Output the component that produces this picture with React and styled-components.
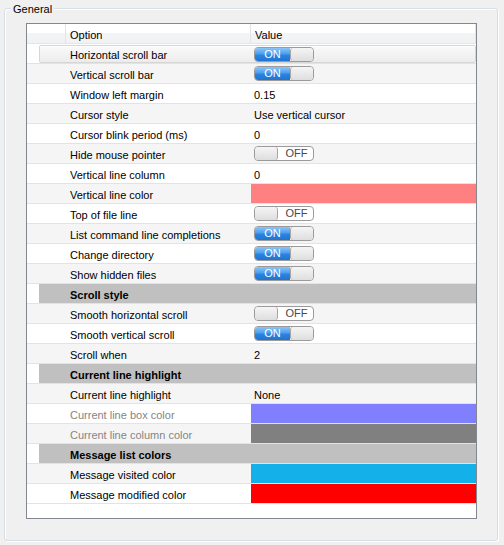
import React from 'react';
import styled, { createGlobalStyle, css } from 'styled-components';

const GlobalStyle = createGlobalStyle`
    body {
        margin: 0;
        background: #f0f0f0;
        font-family: "Liberation Sans", Arial, sans-serif;
        font-size: 11px;
        color: #000;
    }
`;

const Page = styled.div`
    width: 504px;
    height: 545px;
    padding: 8px 6px 0 4px;
    box-sizing: border-box;
    background: #f0f0f0;
`;

const GroupBox = styled.div`
    position: relative;
    height: 533px;
    box-sizing: border-box;
    border: 1px solid #d5dfe5;
    border-radius: 3px;
    box-shadow: inset 1px 1px 0 #fff, 1px 1px 0 #fff;
    padding: 14px 20px 0 21px;
`;

const GroupTitle = styled.div`
    position: absolute;
    top: -7px;
    left: 6px;
    padding: 0 2px;
    background: #f0f0f0;
    line-height: 14px;
`;

const Table = styled.div`
    height: 496px;
    box-sizing: border-box;
    border: 1px solid #828790;
    background: #fff;
    display: flex;
    flex-direction: column;
`;

const Header = styled.div`
    display: grid;
    grid-template-columns: 39px 185px 1fr;
    height: 20px;
    box-sizing: border-box;
    border-bottom: 1px solid #e5e5e5;
    background: linear-gradient(#fff 0%, #fff 45%, #f3f4f6 50%, #f1f2f4 100%);
`;

const HeaderCell = styled.div`
    display: flex;
    align-items: center;
    padding: 2px 0 0 ${(p) => p.$pad || 4}px;
    border-right: 1px solid #e3e4e6;
`;

const Row = styled.div`
    display: grid;
    grid-template-columns: 12px 1fr;
    height: 20px;
    box-sizing: border-box;
    border-bottom: 1px solid #e3e3e3;
    background: ${(p) => (p.$alt ? '#f5f5f5' : '#fff')};
`;

const Indent = styled.div`
    background: ${(p) => (p.$white ? '#fff' : 'transparent')};
`;

const RowBody = styled.div`
    display: grid;
    grid-template-columns: 213px 1fr;
    align-items: stretch;
    ${(p) =>
        p.$section &&
        css`
            background: #c0c0c0;
            font-weight: bold;
        `}
    ${(p) =>
        p.$selected &&
        css`
            margin-top: 1px;
            border: 1px solid #d6d6d6;
            border-radius: 2px;
            background: linear-gradient(#fafafa, #ececec);
            box-shadow: inset 0 1px 0 #fff;
            grid-template-columns: 212px 1fr;
        `}
`;

const OptionCell = styled.div`
    display: flex;
    align-items: center;
    padding: 2px 0 0 ${(p) => (p.$shift ? 30 : 31)}px;
    color: ${(p) => (p.$disabled ? '#858585' : '#000')};
    white-space: nowrap;
`;

const ValueCell = styled.div`
    display: flex;
    align-items: center;
    padding-left: 2px;
    padding-top: ${(p) => (p.$text ? 2 : 0)}px;
    background: ${(p) => p.$color || 'transparent'};
    ${(p) => p.$color && css`margin-left: -1px;`}
`;

const Toggle = styled.div`
    display: flex;
    width: 60px;
    height: 15px;
    box-sizing: border-box;
    border: 1px solid #9b9b9b;
    border-radius: 4px;
    overflow: hidden;
    background: #fff;
    flex-direction: ${(p) => (p.$on ? 'row' : 'row-reverse')};
    font-size: 11px;
    line-height: 13px;
`;

const ToggleLabel = styled.div`
    flex: 1;
    text-align: center;
    ${(p) =>
        p.$on
            ? css`
                  color: #fff;
                  background: linear-gradient(#8cc6f7 0%, #4d9eed 45%, #2a84e0 55%, #1f74d2 100%);
              `
            : css`
                  color: #4a4a4a;
                  padding-left: 2px;
              `}
`;

const ToggleHandle = styled.div`
    width: 23px;
    box-sizing: border-box;
    border-radius: 3px;
    background: linear-gradient(#f5f5f5, #dedede);
    ${(p) => (p.$on ? css`border-left: 1px solid #a5a5a5;` : css`border-right: 1px solid #a5a5a5;`)}
`;

const Switch = ({ on }) => (
    <Toggle $on={on}>
        <ToggleLabel $on={on}>{on ? 'ON' : 'OFF'}</ToggleLabel>
        <ToggleHandle $on={on} />
    </Toggle>
);

const rows = [
    { label: 'Horizontal scroll bar', toggle: true, selected: true },
    { label: 'Vertical scroll bar', toggle: true },
    { label: 'Window left margin', text: '0.15' },
    { label: 'Cursor style', text: 'Use vertical cursor' },
    { label: 'Cursor blink period (ms)', text: '0' },
    { label: 'Hide mouse pointer', toggle: false },
    { label: 'Vertical line column', text: '0' },
    { label: 'Vertical line color', color: '#ff8080' },
    { label: 'Top of file line', toggle: false },
    { label: 'List command line completions', toggle: true },
    { label: 'Change directory', toggle: true },
    { label: 'Show hidden files', toggle: true },
    { section: 'Scroll style' },
    { label: 'Smooth horizontal scroll', toggle: false },
    { label: 'Smooth vertical scroll', toggle: true },
    { label: 'Scroll when', text: '2' },
    { section: 'Current line highlight' },
    { label: 'Current line highlight', text: 'None' },
    { label: 'Current line box color', color: '#8080ff', disabled: true },
    { label: 'Current line column color', color: '#808080', disabled: true },
    { section: 'Message list colors' },
    { label: 'Message visited color', color: '#13b0ea' },
    { label: 'Message modified color', color: '#ff0000' },
];

const Value = ({ row }) => {
    if (row.color) return <ValueCell $color={row.color} />;
    if (row.toggle !== undefined)
        return (
            <ValueCell>
                <Switch on={row.toggle} />
            </ValueCell>
        );
    return <ValueCell $text>{row.text}</ValueCell>;
};

export default function App() {
    return (
        <Page>
            <GlobalStyle />
            <GroupBox>
                <GroupTitle>General</GroupTitle>
                <Table>
                    <Header>
                        <HeaderCell />
                        <HeaderCell $pad={4}>Option</HeaderCell>
                        <HeaderCell $pad={4}>Value</HeaderCell>
                    </Header>
                    {rows.map((row, i) =>
                        row.section ? (
                            <Row key={i}>
                                <Indent $white />
                                <RowBody $section>
                                    <OptionCell>{row.section}</OptionCell>
                                    <ValueCell />
                                </RowBody>
                            </Row>
                        ) : (
                            <Row key={i} $alt={i % 2 === 1}>
                                <Indent />
                                <RowBody $selected={row.selected}>
                                    <OptionCell $disabled={row.disabled} $shift={row.selected}>
                                        {row.label}
                                    </OptionCell>
                                    <Value row={row} />
                                </RowBody>
                            </Row>
                        )
                    )}
                </Table>
            </GroupBox>
        </Page>
    );
}
